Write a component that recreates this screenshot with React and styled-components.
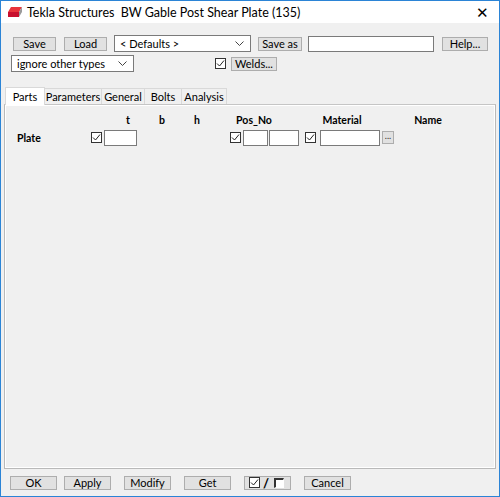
import React from "react";
import styled, { createGlobalStyle } from "styled-components";

const Global = createGlobalStyle`
	html, body { margin: 0; padding: 0; background: #ffffff; }
	* { box-sizing: border-box; }
`;

const Window = styled.div`
	width: 500px;
	height: 497px;
	border: 1px solid #2b84d6;
	display: flex;
	flex-direction: column;
	font-family: Lato, "Noto Sans", sans-serif;
	font-size: 11px;
	color: #000;
	background: #f0f0f0;
`;

const TitleBar = styled.div`
	height: 24px;
	background: #ffffff;
	display: flex;
	align-items: center;
	padding: 0 0 0 6px;
	font-size: 12.5px;
`;

const TitleText = styled.span`
	margin-left: 4px;
	flex: 1;
	white-space: pre;
`;

const Close = styled.span`
	width: 26px;
	text-align: center;
	font-size: 15px;
	font-weight: 300;
	margin-right: 4px;
`;

const Body = styled.div`
	flex: 1;
	display: flex;
	flex-direction: column;
	padding: 12px 3px 0 3px;
`;

const Row = styled.div`
	display: flex;
	align-items: center;
	height: ${(p) => p.h || 17}px;
	padding-left: ${(p) => p.pl || 0}px;
	margin-top: ${(p) => p.mt || 0}px;
`;

const Btn = styled.button`
	width: ${(p) => p.w || 42}px;
	height: ${(p) => p.bh || 14}px;
	margin-left: ${(p) => p.ml || 0}px;
	padding: 0;
	border: 1px solid #adadad;
	background: #e1e1e1;
	font-family: inherit;
	font-size: 11px;
	line-height: 12px;
	color: #000;
	display: flex;
	align-items: center;
	justify-content: center;
`;

const Select = styled.div`
	width: ${(p) => p.w}px;
	height: 17px;
	margin-left: ${(p) => p.ml || 0}px;
	border: 1px solid #7a7a7a;
	background: #fff;
	display: flex;
	align-items: center;
	padding: 0 6px 0 5px;
	justify-content: space-between;
`;

const Input = styled.div`
	width: ${(p) => p.w}px;
	height: ${(p) => p.ih || 15}px;
	margin-left: ${(p) => p.ml || 0}px;
	border: 1px solid #7a7a7a;
	background: #fff;
`;

const Box = styled.span`
	width: 11px;
	height: 11px;
	margin-left: ${(p) => p.ml || 0}px;
	border: 1px solid #333;
	background: #fff;
	display: inline-flex;
	align-items: center;
	justify-content: center;
`;

const Check = ({ ml }) => (
	<Box ml={ml}>
		<svg width="9" height="9" viewBox="0 0 9 9">
			<path d="M1 4.5 L3.5 7 L8 1.5" fill="none" stroke="#222" strokeWidth="1" />
		</svg>
	</Box>
);

const Chevron = () => (
	<svg width="9" height="6" viewBox="0 0 9 6">
		<path d="M0.5 0.5 L4.5 4.5 L8.5 0.5" fill="none" stroke="#444" strokeWidth="1" />
	</svg>
);

const Tabs = styled.div`
	display: flex;
	align-items: flex-end;
	margin-top: 14px;
	padding-left: 1px;
	height: 18px;
`;

const Tab = styled.div`
	height: ${(p) => (p.active ? 18 : 16)}px;
	width: ${(p) => p.w}px;
	border: 1px solid #d9d9d9;
	border-bottom: none;
	border-left: ${(p) => (p.first ? "1px solid #d9d9d9" : "none")};
	background: ${(p) => (p.active ? "#ffffff" : "#f0f0f0")};
	margin-bottom: ${(p) => (p.active ? -1 : 0)}px;
	position: relative;
	z-index: ${(p) => (p.active ? 1 : 0)};
	display: flex;
	align-items: center;
	justify-content: center;
	font-size: 11px;
	white-space: nowrap;
`;

const Panel = styled.div`
	height: 365px;
	border: 1px solid #b9b9b9;
	border-top-color: #c5c5c5;
	box-shadow: inset -1px -1px 0 #ffffff, inset 1px 1px 0 #ffffff;
	padding: 8px 0 0 0;
`;

const HeaderRow = styled.div`
	display: flex;
	height: 14px;
	font-weight: 700;
	font-size: 10.5px;
	align-items: center;
`;

const Head = styled.span`
	width: ${(p) => p.w}px;
	text-align: center;
	margin-left: ${(p) => p.ml || 0}px;
`;

const Label = styled.span`
	width: 86px;
	padding-left: 12px;
	font-weight: 700;
	font-size: 10.5px;
`;

const Dots = styled.span`
	width: 12px;
	height: 13px;
	margin-left: 2px;
	border: 1px solid #adadad;
	background: #e1e1e1;
	font-size: 9px;
	line-height: 8px;
	display: flex;
	justify-content: center;
	color: #333;
`;

const Footer = styled.div`
	display: flex;
	align-items: center;
	height: 27px;
	padding-left: 5px;
`;

const ToggleBox = styled.span`
	width: 10px;
	height: 10px;
	border-left: 2px solid #333;
	border-top: 2px solid #333;
	border-right: 1px solid #fff;
	border-bottom: 1px solid #fff;
	background: #fff;
	display: inline-flex;
	margin: 0 2px;
`;

const Slash = styled.span`
	font-size: 13px;
	font-weight: 700;
	margin: 0 3px;
`;

const Logo = () => (
	<svg width="16" height="12" viewBox="0 0 16 12">
		<path d="M4 1 L15 1 L12 6 L1 6 Z" fill="#e8343c" />
		<path d="M1 6 L12 6 L12 11 L1 11 Z" fill="#c8102e" />
		<path d="M12 6 L15 1 L15 6 L12 11 Z" fill="#9a9a9a" />
	</svg>
);

export default function App() {
	return (
		<>
			<Global />
			<Window>
				<TitleBar>
					<Logo />
					<TitleText>Tekla Structures  BW Gable Post Shear Plate (135)</TitleText>
					<Close>✕</Close>
				</TitleBar>
				<Body>
					<Row h={17} pl={9}>
						<Btn w={43}>Save</Btn>
						<Btn w={43} ml={8}>Load</Btn>
						<Select w={137} ml={7}>
							<span>&lt; Defaults &gt;</span>
							<Chevron />
						</Select>
						<Btn w={44} ml={7}>Save as</Btn>
						<Input w={126} ml={6} ih={16} />
						<Btn w={46} ml={8}>Help...</Btn>
					</Row>
					<Row h={17} pl={7} mt={3}>
						<Select w={123}>
							<span>ignore other types</span>
							<Chevron />
						</Select>
						<Check ml={81} />
						<Btn w={46} ml={5}>Welds...</Btn>
					</Row>
					<Tabs>
						<Tab active first w={40}>Parts</Tab>
						<Tab w={57}>Parameters</Tab>
						<Tab w={43}>General</Tab>
						<Tab w={37}>Bolts</Tab>
						<Tab w={45}>Analysis</Tab>
					</Tabs>
					<Panel>
						<HeaderRow>
							<Head w={10} ml={118}>t</Head>
							<Head w={10} ml={24}>b</Head>
							<Head w={10} ml={25}>h</Head>
							<Head w={40} ml={32}>Pos_No</Head>
							<Head w={50} ml={43}>Material</Head>
							<Head w={40} ml={41}>Name</Head>
						</HeaderRow>
						<Row h={17} mt={2}>
							<Label>Plate</Label>
							<Check ml={0} />
							<Input w={33} ml={2} ih={16} />
							<Check ml={93} />
							<Input w={25} ml={2} ih={16} />
							<Input w={30} ml={1} ih={16} />
							<Check ml={6} />
							<Input w={60} ml={4} ih={16} />
							<Dots>...</Dots>
						</Row>
					</Panel>
					<Footer>
						<Btn w={47} ml={1}>OK</Btn>
						<Btn w={47} ml={7}>Apply</Btn>
						<Btn w={47} ml={13}>Modify</Btn>
						<Btn w={47} ml={13}>Get</Btn>
						<Btn w={47} ml={13}>
							<Check />
							<Slash>/</Slash>
							<ToggleBox />
						</Btn>
						<Btn w={47} ml={13}>Cancel</Btn>
					</Footer>
				</Body>
			</Window>
		</>
	);
}
